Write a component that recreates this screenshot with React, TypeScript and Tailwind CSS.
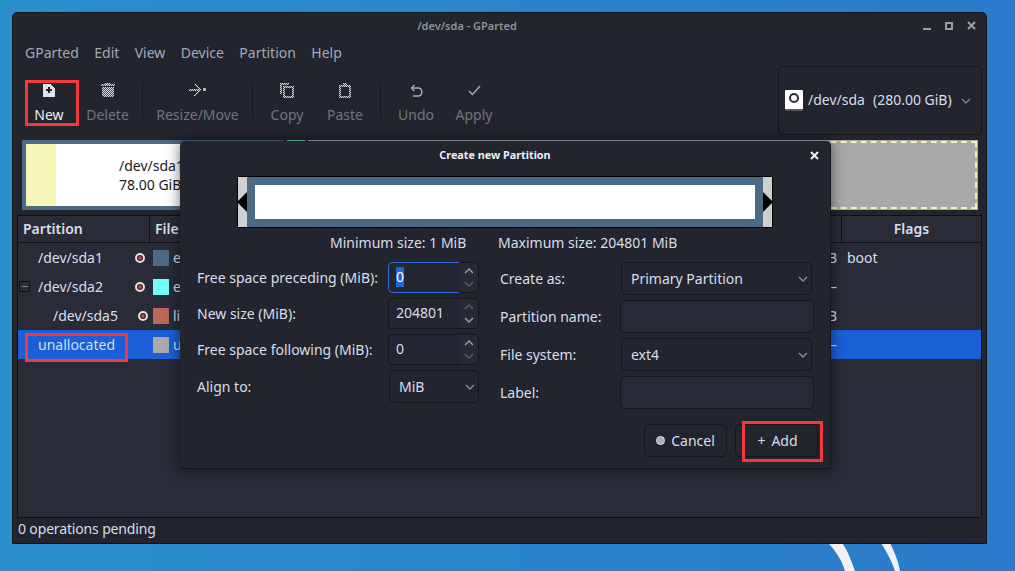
import type { ReactNode } from 'react';

const dither = 'url(#dither)';

function Dithered({ children, w = 16, h = 16 }: { children: ReactNode; w?: number; h?: number }) {
  return (
    <svg width={w} height={h} viewBox={`0 0 ${w} ${h}`} shapeRendering="crispEdges">
      {children}
    </svg>
  );
}

function NewIcon() {
  return (
    <svg width="12" height="13" viewBox="0 0 12 13" shapeRendering="crispEdges">
      <path d="M0 0H8V1H9V2H10V3H11V4H12V13H0Z" fill="#dfe3ea" />
      <path d="M5 3H7V5H9V7H7V9H5V7H3V5H5Z" fill="#1f232d" />
    </svg>
  );
}

function TrashIcon() {
  return (
    <Dithered w={14} h={14}>
      <path d="M4 0H10V1H14V3H0V1H4Z" fill={dither} />
      <path d="M1 4H13V13H12V14H2V13H1Z" fill={dither} />
    </Dithered>
  );
}

function ResizeIcon() {
  return (
    <Dithered w={17} h={13}>
      <path d="M0 5H10V7H0Z" fill={dither} />
      <path d="M5 0H7V1H8V2H9V3H10V4H11V5H12V7H11V8H10V9H9V10H8V11H7V12H5V11H6V10H7V9H8V8H9V7H10V5H9V4H8V3H7V2H6V1H5Z" fill={dither} />
      <path d="M14 4H17V7H14Z" fill="#b4b6ba" />
    </Dithered>
  );
}

function CopyIcon() {
  return (
    <Dithered w={14} h={15}>
      <path d="M0 0H9V2H2V11H0Z" fill={dither} />
      <path d="M3 3H14V15H3ZM5 5V13H12V5Z" fill={dither} fillRule="evenodd" />
    </Dithered>
  );
}

function PasteIcon() {
  return (
    <Dithered w={12} h={15}>
      <path d="M0 2H4V0H8V2H12V15H0ZM2 4V13H10V4Z" fill={dither} fillRule="evenodd" />
    </Dithered>
  );
}

function UndoIcon() {
  return (
    <svg width="13" height="13" viewBox="0 0 13 13">
      <path d="M4.5 1L1.5 4L4.5 7" fill="none" stroke="#a9abb0" strokeWidth="1.4" />
      <path d="M2 4H8C10.2 4 11.8 5.6 11.8 8S10.2 12 8 12H3" fill="none" stroke="#a9abb0" strokeWidth="1.4" />
    </svg>
  );
}

function CheckIcon() {
  return (
    <svg width="13" height="11" viewBox="0 0 13 11">
      <path d="M1 6L4.5 9.5L12 1" fill="none" stroke="#a9abb0" strokeWidth="1.4" />
    </svg>
  );
}

function Chevron({ className = '' }: { className?: string }) {
  return (
    <svg width="10" height="6" viewBox="0 0 10 6" className={className}>
      <path d="M1 1L5 5L9 1" fill="none" stroke="currentColor" strokeWidth="1.4" />
    </svg>
  );
}

function ToolItem({ label, icon, width, active }: { label: string; icon: ReactNode; width: string; active?: boolean }) {
  return (
    <div className={`flex flex-col items-center shrink-0 ${width}`}>
      <div className="h-[22px] flex items-center justify-center">{icon}</div>
      <span className={`text-[14px] leading-[20px] mt-[4px] ${active ? 'text-[#eceff4]' : 'text-[#70747c]'}`}>{label}</span>
    </div>
  );
}

function Separator() {
  return <div className="w-px h-[37px] bg-[#15171d] self-start mt-[3px] shrink-0" />;
}

const rows = [
  { name: '/dev/sda1', pad: 'pl-[20px] pr-[8px]', color: 'bg-[#4d6a85]', fs: 'e', tail: 'B' },
  { name: '/dev/sda2', pad: 'pl-[20px] pr-[8px]', color: 'bg-[#75fdfd]', fs: 'e', tail: '–', expander: true },
  { name: '/dev/sda5', pad: 'pl-[35px] pr-[5px]', color: 'bg-[#b9665b]', fs: 'li', tail: 'B' },
];

function LockDot() {
  return (
    <span className="w-[10px] h-[10px] rounded-full bg-[#1f232d] border-2 border-[#e4e4e4] flex items-center justify-center shrink-0">
      <span className="w-[4px] h-[4px] rounded-full bg-[#e0313f]" />
    </span>
  );
}

function TableRow({ name, pad, color, fs, tail, expander }: (typeof rows)[number]) {
  return (
    <div className="relative flex items-center h-[29px] text-[#d8dee9]">
      {expander && (
        <span className="absolute left-[1px] top-[9px] w-[11px] h-[11px] rounded-[2px] border border-[#0d0f13] flex items-center justify-center">
          <span className="w-[6px] h-px bg-[#7b7f86]" />
        </span>
      )}
      <div className={`w-[135px] shrink-0 flex items-center justify-between ${pad}`}>
        <span>{name}</span>
        <LockDot />
      </div>
      <span className={`w-[16px] h-[16px] shrink-0 ${color}`} />
      <span className="ml-[4px]">{fs}</span>
      <span className="ml-auto mr-[144px]">{tail}</span>
      <span className="absolute left-[829px]">{name === '/dev/sda1' ? 'boot' : ''}</span>
    </div>
  );
}

function SpinEntry({ value, focused, upDim, downDim }: { value: string; focused?: boolean; upDim?: boolean; downDim?: boolean }) {
  return (
    <div className="w-[91px] h-[31px] flex">
      <div
        className={`flex-1 rounded-l-[5px] border border-r-0 flex items-center pb-[1px] pl-[7px] bg-[#232630] ${
          focused ? 'border-[#2f6fe0]' : 'border-[#14161b]'
        }`}
      >
        <span className={focused ? 'bg-[#2264dc] text-white' : ''}>{value}</span>
      </div>
      <div className="w-[20px] h-full rounded-r-[5px] border border-l-0 border-[#14161b] bg-[#262a34] flex flex-col items-center justify-around py-[2px]">
        <Chevron className={`rotate-180 ${upDim ? 'text-[#5b5f66]' : 'text-[#9da1a8]'}`} />
        <Chevron className={downDim ? 'text-[#5b5f66]' : 'text-[#9da1a8]'} />
      </div>
    </div>
  );
}

function SelectBox({ value, w }: { value: string; w: string }) {
  return (
    <div className={`h-[33px] rounded-[5px] border border-[#14161b] bg-[#22252e] flex items-center justify-between pl-[9px] pr-[3px] ${w}`}>
      <span>{value}</span>
      <Chevron className="text-[#8a8e95]" />
    </div>
  );
}

function Entry() {
  return <div className="w-[194px] h-[33px] rounded-[5px] border border-[#14161b] bg-[#272a35]" />;
}

function FormRow({ label, children }: { label: string; children: ReactNode }) {
  return (
    <div className="flex items-center justify-between">
      <span>{label}</span>
      {children}
    </div>
  );
}

function CreateDialog() {
  return (
    <div className="absolute left-[180px] top-[141px] w-[651px] h-[328px] bg-[#22252e] rounded-t-[5px] border-b border-r border-[#14161b] shadow-[0_0_14px_rgba(0,0,0,0.55)] text-[14px] leading-[20px] text-[#d8dee9]">
      <div className="relative h-[28px] flex items-center justify-center pr-[20px] text-[10.8px] font-bold text-[#eceff4]">
        Create new Partition
        <svg width="9" height="9" viewBox="0 0 9 9" className="absolute left-[630px] top-[10px]">
          <path d="M1 1L8 8M8 1L1 8" stroke="#f1f3f6" strokeWidth="2" />
        </svg>
      </div>

      <div className="mt-[7px] ml-[57px] w-[536px] h-[52px] border border-black flex bg-[#4d6a85]">
        <div className="relative w-[9px] bg-[#d0d0d0]">
          <span className="absolute right-0 top-[15px] w-0 h-0 border-y-[10px] border-y-transparent border-r-[10px] border-r-black" />
        </div>
        <div className="flex-1 px-[8px] py-[8px]">
          <div className="h-full bg-white" />
        </div>
        <div className="relative w-[9px] bg-[#d0d0d0]">
          <span className="absolute left-0 top-[15px] w-0 h-0 border-y-[10px] border-y-transparent border-l-[10px] border-l-black" />
        </div>
      </div>

      <div className="flex mt-[5px] h-[20px] items-center">
        <span className="ml-[150px] w-[168px]">Minimum size: 1 MiB</span>
        <span>Maximum size: 204801 MiB</span>
      </div>

      <div className="flex mt-[9px]">
        <div className="w-[299px] pl-[17px] shrink-0 flex flex-col gap-[5px]">
          <FormRow label="Free space preceding (MiB):">
            <SpinEntry value="0" focused downDim />
          </FormRow>
          <FormRow label="New size (MiB):">
            <SpinEntry value="204801" upDim />
          </FormRow>
          <FormRow label="Free space following (MiB):">
            <SpinEntry value="0" downDim />
          </FormRow>
          <FormRow label="Align to:">
            <SelectBox value="MiB" w="w-[90px]" />
          </FormRow>
        </div>

        <div className="ml-[21px] w-[314px] flex flex-col gap-[5px]">
          <FormRow label="Create as:">
            <SelectBox value="Primary Partition" w="w-[191px] mr-[2px]" />
          </FormRow>
          <FormRow label="Partition name:">
            <Entry />
          </FormRow>
          <FormRow label="File system:">
            <SelectBox value="ext4" w="w-[191px] mr-[2px]" />
          </FormRow>
          <FormRow label="Label:">
            <Entry />
          </FormRow>
        </div>
      </div>

      <div className="flex justify-end gap-[8px] mt-[15px] pr-[12px]">
        <div className="w-[83px] h-[33px] rounded-[5px] border border-[#14161b] flex items-center justify-center gap-[6px]">
          <span className="w-[9px] h-[9px] rounded-full bg-[#a9acb2] border border-[#e0e3e7]" />
          Cancel
        </div>
        <div className="w-[83px] h-[33px] rounded-[5px] border border-[#14161b] flex items-center justify-center gap-[6px] pl-[2px]">
          <span>+</span>
          Add
        </div>
      </div>
    </div>
  );
}

export default function App() {
  return (
    <div
      className="relative w-[1015px] h-[571px] overflow-hidden pt-[12px] pl-[12px] bg-gradient-to-r from-[#2a8fcb] to-[#2b7acb]"
      style={{ fontFamily: '"Noto Sans", sans-serif' }}
    >
      {/* wallpaper swooshes under the window */}
      <svg width="1015" height="571" className="absolute left-0 top-0">
        <path d="M828 543C836 551 842 561 845 571H855C851 560 848 551 842 543Z" fill="#f1f1f1" />
        <path d="M881 543C887 552 892 562 895 571H900C898 560 894 551 890 543Z" fill="#f1f1f1" />
      </svg>

      <svg width="0" height="0" className="absolute">
        <defs>
          <pattern id="dither" width="2" height="2" patternUnits="userSpaceOnUse">
            <rect width="2" height="2" fill="#4a4d55" />
            <rect width="1" height="1" fill="#d8dade" />
            <rect x="1" y="1" width="1" height="1" fill="#d8dade" />
          </pattern>
        </defs>
      </svg>

      <div className="relative w-[975px] h-[532px] bg-[#22252e] rounded-t-[5px] border border-[#0f1115] flex flex-col text-[#d8dee9]">
        {/* title bar */}
        <div className="relative h-[26px] shrink-0 flex items-center justify-center pr-[65px] text-[11px] font-semibold text-[#8f939a]">
          /dev/sda - GParted
          <div className="absolute right-[10px] top-[8px] flex items-center gap-[14px]">
            <span className="w-[8px] h-[2px] bg-[#9b9ea5] mt-[7px]" />
            <span className="w-[8px] h-[8px] border-2 border-[#9b9ea5]" />
            <svg width="9" height="9" viewBox="0 0 9 9">
              <path d="M1 1L8 8M8 1L1 8" stroke="#9b9ea5" strokeWidth="2" />
            </svg>
          </div>
        </div>

        {/* menu bar */}
        <div className="h-[27px] shrink-0 flex items-center pl-[12px] gap-[15.4px] text-[14px] text-[#a2a9b4]">
          <span>GParted</span>
          <span>Edit</span>
          <span>View</span>
          <span>Device</span>
          <span>Partition</span>
          <span>Help</span>
        </div>

        {/* toolbar */}
        <div className="relative h-[74px] shrink-0 flex items-start pt-[2px]">
          <div className="flex items-start pt-[11px] pl-[12px]">
            <ToolItem label="New" icon={<NewIcon />} width="w-[48px]" active />
            <ToolItem label="Delete" icon={<TrashIcon />} width="w-[69px]" />
            <Separator />
            <ToolItem label="Resize/Move" icon={<ResizeIcon />} width="w-[109px]" />
            <Separator />
            <ToolItem label="Copy" icon={<CopyIcon />} width="w-[68px]" />
            <ToolItem label="Paste" icon={<PasteIcon />} width="w-[48px] mr-[11px]" />
            <Separator />
            <ToolItem label="Undo" icon={<UndoIcon />} width="w-[70px]" />
            <ToolItem label="Apply" icon={<CheckIcon />} width="w-[46px]" />
          </div>
          <div className="absolute right-[4px] top-0 w-[204px] h-[69px] rounded-[5px] border border-[#14161b] flex items-center pl-[6px] text-[14px]">
            <span className="relative w-[18px] h-[21px] bg-white rounded-[1px] flex justify-center pt-[3px] border-b-2 border-[#55585e] shrink-0">
              <span className="w-[10px] h-[10px] rounded-full border-2 border-[#2a2d33]" />
            </span>
            <span className="ml-[5px] pb-[2px]">/dev/sda</span>
            <span className="ml-[8px] pb-[2px]">(280.00 GiB)</span>
            <Chevron className="ml-[9px] text-[#7f838a]" />
          </div>
        </div>

        {/* disk visual */}
        <div className="relative h-[70px] shrink-0 ml-[9px] mr-[8px] flex gap-[3px]">
          <div className="w-[262px] border-4 border-[#4d6a85] flex">
            <div className="w-[30px] bg-[#f6f6b8]" />
            <div className="flex-1 bg-white text-[#1a1a1a] text-[14px] leading-[19px] pt-[12px] pl-[63px]">
              <p>/dev/sda1</p>
              <p>78.00 GiB</p>
            </div>
          </div>
          <div className="w-[18px] bg-[#5dd0d0]" />
          <div className="flex-1 bg-[#a9a9a9] p-px">
            <div className="h-full border-2 border-dashed border-[#f4f4b0]" />
          </div>
        </div>

        {/* partition table */}
        <div className="h-[303px] shrink-0 mt-[5px] ml-[4px] mr-[4px] border border-[#101216] bg-[#292c37] text-[14px] leading-[20px]">
          <div className="h-[27px] flex font-semibold text-[#d8dee9] border-b border-[#101216]">
            <div className="w-[132px] pl-[5px] flex items-center border-r border-[#101216]">Partition</div>
            <div className="flex-1 pl-[5px] flex items-center">File System</div>
            <div className="w-[140px] flex items-center justify-center border-l border-[#101216]">Flags</div>
          </div>
          {rows.map((row) => (
            <TableRow key={row.name} {...row} />
          ))}
          <div className="relative flex items-center h-[29px] bg-[#1a5fd8] text-[#d8dee9]">
            <div className="w-[135px] shrink-0 pl-[20px]">unallocated</div>
            <span className="w-[16px] h-[16px] shrink-0 bg-[#a9a9a9]" />
            <span className="ml-[4px]">u</span>
            <span className="ml-auto mr-[144px]">–</span>
          </div>
        </div>

        <div className="flex-1 flex items-center pl-[5px] pb-[5px] text-[14px] tracking-[-0.15px] text-[#d8dee9]">0 operations pending</div>
      </div>

      <CreateDialog />

      {/* red annotation boxes from the screenshot */}
      <div className="absolute left-[25px] top-[80px] w-[54px] h-[46px] border-[3px] border-[#f23a3a]" />
      <div className="absolute left-[25px] top-[333px] w-[103px] h-[29px] border-[3px] border-[#f23a3a]" />
      <div className="absolute left-[742px] top-[421px] w-[81px] h-[41px] border-[3px] border-[#f23a3a]" />
    </div>
  );
}
